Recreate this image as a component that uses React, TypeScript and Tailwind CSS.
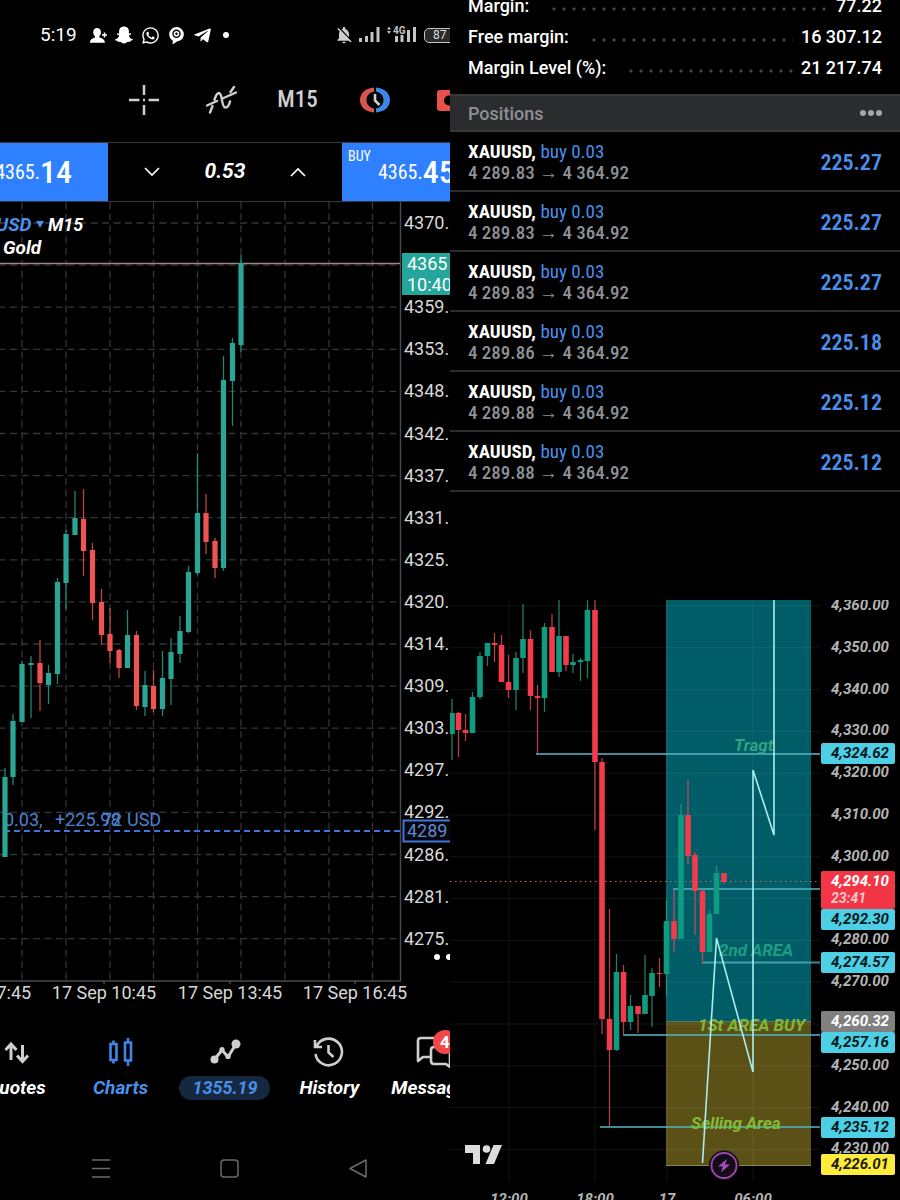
import type { ReactNode } from 'react';
import { FaSnapchatGhost, FaTelegramPlane, FaWhatsapp } from 'react-icons/fa';
import { MdNotificationsOff } from 'react-icons/md';

// [x, high, body top, body bottom, low, up?]
type Candle = [number, number, number, number, number, 0 | 1];

const goldCandles: Candle[] = [
  [5, 768, 777, 857, 857, 1],
  [13, 714, 721, 777, 785, 1],
  [22, 661, 664, 722, 722, 1],
  [31, 656, 663, 665, 718, 1],
  [40, 640, 663, 683, 711, 0],
  [48.5, 665, 673, 685, 704, 1],
  [57.5, 578, 582, 674, 684, 1],
  [66, 530, 534, 583, 609, 1],
  [75, 491, 518, 535, 535, 1],
  [83.5, 489, 519, 551, 576, 0],
  [92.5, 543, 550, 603, 620, 0],
  [101.5, 589, 602, 635, 645, 0],
  [110, 608, 634, 651, 663, 0],
  [119, 649, 650, 668, 678, 0],
  [127.5, 610, 635, 668, 668, 1],
  [136.5, 631, 635, 706, 710, 0],
  [145, 671, 685, 707, 716, 1],
  [153.5, 670, 686, 709, 712, 0],
  [162.5, 651, 678, 709, 716, 1],
  [171, 638, 652, 679, 705, 1],
  [180, 616, 631, 654, 663, 1],
  [188.5, 566, 572, 632, 633, 1],
  [197.5, 453, 513, 573, 575, 1],
  [206, 494, 513, 542, 554, 0],
  [215, 538, 541, 568, 578, 0],
  [223.5, 356, 380, 568, 571, 1],
  [232.5, 338, 343, 381, 426, 1],
  [241, 255, 263, 345, 352, 1],
];

const setupCandles: Candle[] = [
  [452, 699, 713, 734, 760, 1],
  [458.5, 712, 713, 730, 757, 0],
  [465.5, 714, 730, 733, 741, 0],
  [472.5, 692, 697, 733, 733, 1],
  [480, 652, 656, 697, 699, 1],
  [487.5, 643, 643, 656, 666, 1],
  [494.5, 633, 643, 645, 662, 0],
  [501.5, 635, 645, 682, 682, 0],
  [508.5, 655, 682, 690, 698, 0],
  [516, 652, 658, 690, 710, 1],
  [523, 604, 639, 658, 673, 1],
  [530.5, 630, 639, 696, 710, 0],
  [537.5, 685, 696, 698, 754, 0],
  [544.5, 623, 627, 698, 712, 1],
  [552, 614, 627, 672, 672, 0],
  [559, 600, 636, 672, 677, 1],
  [566, 636, 636, 665, 671, 0],
  [573, 654, 662, 665, 673, 1],
  [580.5, 658, 660, 662, 681, 1],
  [587.5, 600, 610, 661, 678, 1],
  [595, 600, 610, 762, 830, 0],
  [602, 758, 762, 1019, 1034, 0],
  [609.5, 909, 1019, 1050, 1126, 0],
  [616.5, 954, 972, 1050, 1051, 1],
  [623.5, 965, 972, 1022, 1034, 0],
  [630.5, 995, 1006, 1022, 1030, 1],
  [638, 1006, 1006, 1014, 1033, 0],
  [645, 955, 995, 1014, 1014, 1],
  [652, 968, 973, 996, 1027, 1],
  [659.5, 958, 973, 974, 987, 0],
  [666.5, 900, 921, 974, 997, 1],
  [674, 889, 921, 939, 952, 0],
  [681, 804, 815, 939, 939, 1],
  [688, 780, 815, 856, 864, 0],
  [695, 852, 855, 891, 935, 0],
  [702.5, 890, 891, 952, 964, 0],
  [709.5, 910, 914, 952, 952, 1],
  [716.5, 866, 873, 914, 914, 1],
  [724, 873, 873, 882, 884, 0],
];

const goldPrices = [
  '4370.', '', '4359.', '4353.', '4348.', '4342.', '4337.', '4331.', '4325.',
  '4320.', '4314.', '4309.', '4303.', '4297.', '4292.', '4286.', '4281.', '4275.',
];
const goldTimes = [
  { x: -21, label: '17 Sep 07:45' },
  { x: 104, label: '17 Sep 10:45' },
  { x: 230, label: '17 Sep 13:45' },
  { x: 355, label: '17 Sep 16:45' },
];
const goldColumns = [22, 66, 110, 153.5, 197.5, 241, 285, 329, 372.5];

const setupPrices = [
  '4,360.00', '4,350.00', '4,340.00', '4,330.00', '4,320.00', '4,310.00', '4,300.00',
  '', '4,280.00', '4,270.00', '', '4,250.00', '4,240.00', '4,230.00',
];
const setupTimes = [
  { x: 509, label: '12:00' },
  { x: 595, label: '18:00' },
  { x: 667, label: '17' },
  { x: 753, label: '06:00' },
];
const levels = [
  { x: 536, y: 754 },
  { x: 673, y: 889 },
  { x: 703, y: 962.5 },
  { x: 623, y: 1035 },
  { x: 600, y: 1127 },
];
const priceTags = [
  { y: 743, label: '4,324.62', box: 'fill-[#4dd0e5]', text: 'fill-[#06191c]' },
  { y: 909, label: '4,292.30', box: 'fill-[#4dd0e5]', text: 'fill-[#06191c]' },
  { y: 952, label: '4,274.57', box: 'fill-[#4dd0e5]', text: 'fill-[#06191c]' },
  { y: 1011, label: '4,260.32', box: 'fill-[#808080]', text: 'fill-white' },
  { y: 1032, label: '4,257.16', box: 'fill-[#4dd0e5]', text: 'fill-[#06191c]' },
  { y: 1117, label: '4,235.12', box: 'fill-[#4dd0e5]', text: 'fill-[#06191c]' },
  { y: 1154, label: '4,226.01', box: 'fill-[#ffeb3b]', text: 'fill-[#1c1a06]' },
];
const notes = [
  { x: 734, y: 751, label: 'Tragt', fill: 'fill-[#2fa384]' },
  { x: 719, y: 956, label: '2nd AREA', fill: 'fill-[#1f9c82]' },
  { x: 698, y: 1031, label: '1St AREA BUY', fill: 'fill-[#7fb73c]' },
  { x: 691, y: 1129, label: 'Selling Area', fill: 'fill-[#84bb35]' },
];

const margins = [
  { label: 'Margin:', value: '77.22' },
  { label: 'Free margin:', value: '16 307.12' },
  { label: 'Margin Level (%):', value: '21 217.74' },
];
const positions = [
  { open: '4 289.83', profit: '225.27' },
  { open: '4 289.83', profit: '225.27' },
  { open: '4 289.83', profit: '225.27' },
  { open: '4 289.86', profit: '225.18' },
  { open: '4 289.88', profit: '225.12' },
  { open: '4 289.88', profit: '225.12' },
];

function Candles({ data, width, up, down }: { data: Candle[]; width: number; up: string; down: string }) {
  return (
    <g>
      {data.map(([x, high, top, bottom, low, isUp], i) => (
        <g key={i} className={isUp ? up : down}>
          <line x1={x} x2={x} y1={high} y2={low} strokeWidth="1.3" opacity="0.8" />
          <rect x={x - width / 2} y={top} width={width} height={bottom - top} stroke="none" />
        </g>
      ))}
    </g>
  );
}

function StatusBar() {
  return (
    <div className="flex h-[66px] items-center pt-1 pr-[22px] pl-[76px] text-white">
      <span className="w-[50px] text-[19px]">5:19</span>
      <svg className="h-[17px] w-[17px]" viewBox="0 0 17 17" fill="currentColor">
        <path d="M7 1c2.500 0 4 1.800 4 4.200 0 1.600-.7 3-1.700 3.900v1.300c2.500.8 5.200 1.500 5.500 4.600v.7H0V15c.3-3 2.800-3.800 4.900-4.600V9.100C4 8.200 3.200 6.800 3.200 5.200 3.200 2.800 4.700 1 7 1Z" />
        <path d="M14.500 5.500v5M12 8h5" stroke="currentColor" strokeWidth="1.500" />
      </svg>
      <FaSnapchatGhost className="ml-2 h-[18px] w-[18px]" />
      <FaWhatsapp className="ml-2 h-[19px] w-[19px]" />
      <svg className="ml-2 h-[19px] w-[17px]" viewBox="0 0 17 19">
        <path d="M8.500 1a7.300 7.300 0 0 1 7.300 7.300c0 4-3.200 6.800-6.700 7.100L4.500 18.500l.4-3.800C2.600 13.400 1.200 11.200 1.200 8.300A7.300 7.300 0 0 1 8.500 1Z" fill="white" />
        <circle cx="8.500" cy="7.800" r="4.200" className="fill-black" />
        <circle cx="8.500" cy="7.800" r="2.800" fill="white" />
        <circle cx="8.500" cy="7.800" r="1.200" className="fill-black" />
      </svg>
      <FaTelegramPlane className="ml-2 h-[19px] w-[19px]" />
      <span className="ml-[11px] h-1.5 w-1.5 rounded-full bg-white" />
      <MdNotificationsOff className="ml-auto h-5 w-5 text-[#cfcfcf]" />
      <svg className="ml-1 h-[18px] w-6 fill-[#c4c4c4]" viewBox="0 0 24 18">
        <path d="M1 12h3v4H1zM7 10h3v6H7zM12.500 6h3v10h-3zM18.500 1h3v15h-3z" />
      </svg>
      <svg className="ml-1 h-[20px] w-8 fill-[#c4c4c4]" viewBox="0 0 32 20">
        <path d="m1 4.500 2-3 2 3zM1 6l2 3 2-3zM9 11h3v6H9zM14.500 10h3v7h-3zM21 5h3v12h-3zM27 2h3v15h-3z" />
        <text x="7" y="9" className="font-[Roboto] text-[10px] font-bold">4G</text>
      </svg>
      <span className="ml-1.5 w-[40px] rounded-[5px] border border-[#c4c4c4] bg-[#2a2a2a] pl-2 text-[12px] leading-[13px] text-[#dcdcdc]">87</span>
    </div>
  );
}

function Toolbar() {
  return (
    <div className="flex h-[76px] pt-2.5 pr-0 pl-[141px] text-[#cfcfcf]">
      <div className="-mr-1 grid flex-1 grid-cols-5 *:flex *:h-12 *:items-center *:justify-center">
        <button type="button" aria-label="Crosshair">
          <svg className="h-8 w-8" viewBox="0 0 32 32" stroke="currentColor" strokeWidth="2.500">
            <path d="M16 1v10M16 21v10M1 16h10.500M20.500 16H31M15 16h2" />
          </svg>
        </button>
        <button type="button" aria-label="Indicators">
          <svg className="h-8 w-8" viewBox="0 0 32 32" fill="none" stroke="currentColor" strokeWidth="2.400" strokeLinecap="round">
            <path d="M2 21.500 12 17M18.500 14 31 8.500M5 28.500 7.500 22M9.500 15.500C11 11 12.500 9 14 9c4 .5 2 14.500 6.500 14.500 2.800 0 3.800-3 4.500-6M25.500 8l3.500-5" />
          </svg>
        </button>
        <button type="button" className="font-['Roboto_Condensed','Roboto',sans-serif] text-[23px] font-medium">M15</button>
        <button type="button" aria-label="Trading sessions">
          <svg className="h-8 w-8" viewBox="0 0 32 32">
            <path d="M15 3.500C7 4 1 9 1 16s6 12 14 12.500v-4C10.500 23.500 7.500 20.500 7.500 16S10.500 8.500 15 7.500Z" className="fill-[#d9574a]" />
            <path d="M17 3.500C25 4 31 9 31 16s-6 12-14 12.500v-4c4.500-1 7.500-4 7.500-8.500S21.500 8.500 17 7.500Z" className="fill-[#3f86e8]" />
            <path d="M16 10v6.500l4.500 4.500" fill="none" stroke="currentColor" strokeWidth="2.600" />
          </svg>
        </button>
        <button type="button" aria-label="One click trading">
          <svg className="h-8 w-8" viewBox="0 0 32 32">
            <rect x="1" y="6" width="30" height="21" rx="3" className="fill-[#e8514a]" />
            <circle cx="13" cy="16.500" r="5" className="fill-black" />
          </svg>
        </button>
      </div>
    </div>
  );
}

function TradeBar() {
  return (
    <div className="flex h-[60px] border-y border-[#3a3a3a] text-white">
      <button type="button" className="flex w-36 items-center justify-end bg-[#2f80ff] pr-9 font-['Roboto_Condensed','Roboto',sans-serif]">
        <span className="text-[20px] leading-9">4365.</span>
        <span className="text-[32px] leading-9 font-medium">14</span>
      </button>
      <div className="flex flex-1 items-center justify-between px-9">
        <button type="button" aria-label="Decrease volume">
          <svg className="h-4 w-4" viewBox="0 0 16 16" fill="none" stroke="white" strokeWidth="1.700"><path d="m1 4 7 7 7-7" /></svg>
        </button>
        <span className="text-[21px] font-bold italic">0.53</span>
        <button type="button" aria-label="Increase volume">
          <svg className="h-4 w-4" viewBox="0 0 16 16" fill="none" stroke="white" strokeWidth="1.700"><path d="m1 12 7-7 7 7" /></svg>
        </button>
      </div>
      <button type="button" className="relative flex w-36 items-center bg-[#2f80ff] pl-9 font-['Roboto_Condensed','Roboto',sans-serif]">
        <span className="absolute top-1 left-1.5 text-[14px] leading-[18px]">BUY</span>
        <span className="text-[20px] leading-9">4365.</span>
        <span className="text-[32px] leading-9 font-medium">45</span>
      </button>
    </div>
  );
}

function GoldChart() {
  return (
    <svg className="block w-full font-[Roboto]" viewBox="-36 202 522 810">
      <g className="stroke-[#353538]" strokeWidth="1.300" strokeDasharray="7 4.500">
        {goldColumns.map((x) => <line key={x} x1={x} x2={x} y1="202" y2="980" />)}
        {goldPrices.map((_, i) => <line key={i} x1="-36" x2="400" y1={223 + i * 42.1} y2={223 + i * 42.1} />)}
      </g>
      <path d="M400.500 202V981H-36M104 981v3M230 981v3M355 981v3" fill="none" className="stroke-[#4a4a4e]" strokeWidth="1.400" />
      <line x1="-36" x2="400" y1="263.500" y2="263.500" className="stroke-[#9c8782]" strokeWidth="1.600" />

      <g className="fill-[#4a80d0] text-[18px]">
        <text x="4" y="826">0.03,</text>
        <text x="55" y="826">+225.98</text>
        <text x="102" y="826">72</text>
        <text x="127" y="826">USD</text>
      </g>
      <line x1="-36" x2="400" y1="831" y2="831" className="stroke-[#3f74dc]" strokeWidth="1.800" strokeDasharray="6 4" />
      <Candles data={goldCandles} width={5.2} up="fill-[#2aa596] stroke-[#2aa596]" down="fill-[#ee5552] stroke-[#ee5552]" />

      <g className="text-[19px] font-bold italic" fill="white">
        <text x="-40" y="231" className="fill-[#4a8fea]">XAUUSD</text>
        <path d="M36 221h8l-4 7z" className="fill-[#4a8fea]" />
        <text x="48" y="231" className="text-[18px]">M15</text>
        <text x="3" y="254">Gold</text>
      </g>

      <g className="fill-[#d8d8d8] text-[18px]">
        {goldPrices.map((price, i) => <text key={i} x="404" y={229 + i * 42.1}>{price}</text>)}
        {goldTimes.map((t) => <text key={t.x} x={t.x} y="999" textAnchor="middle">{t.label}</text>)}
      </g>
      <rect x="402" y="253" width="90" height="42" className="fill-[#26a69a]" />
      <g fill="white" className="text-[18px]">
        <text x="407" y="270">4365</text>
        <text x="407" y="291">10:40</text>
      </g>
      <rect x="403.500" y="820.500" width="90" height="21" className="fill-[#05070d] stroke-[#3f74dc]" strokeWidth="2" />
      <text x="407" y="837" className="fill-[#6488cf] text-[18px]">4289</text>
      <g fill="white">
        <circle cx="437" cy="957" r="3" />
        <circle cx="449" cy="957" r="3" />
      </g>
    </svg>
  );
}

function Tab({ label, active, children }: { label: string; active?: boolean; children: ReactNode }) {
  return (
    <a href="#" className={`flex flex-col items-center gap-2 ${active ? 'text-[#3f86ea]' : 'text-[#cfcfcf]'}`}>
      {children}
      <span className={`text-[19px] leading-6 font-bold italic ${active ? 'text-[#4a8fea]' : 'text-white'}`}>{label}</span>
    </a>
  );
}

function TabBar() {
  return (
    <nav className="grid h-[112px] grid-cols-5 pt-6">
      <Tab label="Quotes">
        <svg className="h-8 w-8" viewBox="0 0 32 32" fill="none" stroke="currentColor" strokeWidth="3">
          <path d="M11 24V9M5.500 14 11 8l5.500 6M22.500 9v15M17 19.500l5.500 6 5.500-6" />
        </svg>
      </Tab>
      <Tab label="Charts" active>
        <svg className="h-8 w-8" viewBox="0 0 32 32" fill="none" stroke="currentColor" strokeWidth="2.600">
          <path d="M5.500 8h6v16h-6zM8.500 4.500V8M8.500 24v3.500M20 6.500h6v18h-6zM23 2v4.500M23 24.500V30" />
        </svg>
      </Tab>
      <a href="#" className="flex flex-col items-center gap-2 text-[#cfcfcf]">
        <svg className="h-8 w-8" viewBox="0 0 32 32" fill="none" stroke="currentColor" strokeWidth="3">
          <path d="m5 24 8-10 6 7L27 8" strokeLinejoin="round" />
          <circle cx="5.500" cy="23.500" r="4" fill="currentColor" stroke="none" />
          <circle cx="27" cy="8" r="4.500" fill="currentColor" stroke="none" />
          <circle cx="13" cy="13.500" r="2.600" fill="currentColor" stroke="none" />
          <circle cx="19" cy="20.500" r="2.600" fill="currentColor" stroke="none" />
        </svg>
        <span className="w-[91px] rounded-full bg-[#15283f] text-center text-[18px] leading-6 font-bold italic text-[#4a8fea]">1355.19</span>
      </a>
      <Tab label="History">
        <svg className="h-8 w-8" viewBox="0 0 32 32" fill="none" stroke="currentColor" strokeWidth="2.600">
          <path d="M3.500 10.500A13.300 13.300 0 1 1 2.500 18M2 4v7h7M15.500 9v7.500l5 4.500" />
        </svg>
      </Tab>
      <Tab label="Messages">
        <span className="relative">
          <svg className="h-8 w-9" viewBox="0 0 36 32" fill="none" stroke="currentColor" strokeWidth="2.600" strokeLinejoin="round">
            <path d="M14 21H7l-5 4V5c0-2 1-3 3-3h21c2 0 3 1 3 3v5" />
            <path d="M18 11h13c2 0 3 1 3 3v17l-4-3H18c-2 0-3-1-3-3V14c0-2 1-3 3-3Z" />
          </svg>
          <span className="absolute -top-1.5 left-[17px] h-6 w-6 rounded-full bg-[#f0484a] text-center text-[17px] leading-6 font-bold text-white">4</span>
        </span>
      </Tab>
    </nav>
  );
}

function SystemNav() {
  return (
    <div className="flex justify-center gap-[104px] pt-8 pr-0 pl-2">
      <button type="button" aria-label="Recents">
        <svg className="h-6 w-6" viewBox="0 0 24 24" fill="none" stroke="#6b6b6b" strokeWidth="1.500"><path d="M3 4h18M3 12.500h18M3 21h18" /></svg>
      </button>
      <button type="button" aria-label="Home">
        <svg className="h-6 w-6" viewBox="0 0 24 24" fill="none" stroke="#6b6b6b" strokeWidth="1.500"><rect x="4" y="4" width="17" height="17" rx="3" /></svg>
      </button>
      <button type="button" aria-label="Back">
        <svg className="h-6 w-6" viewBox="0 0 24 24" fill="none" stroke="#6b6b6b" strokeWidth="1.500" strokeLinejoin="round"><path d="M21 4v17L5 12.500z" /></svg>
      </button>
    </div>
  );
}

function Account() {
  return (
    <section className="pb-[108px]">
      <dl className="-mt-2.5 px-[18px] pb-[11px] text-[18px] leading-[31px] font-medium text-white">
        {margins.map((m) => (
          <div key={m.label} className="flex items-center">
            <dt>{m.label}</dt>
            <dd className="flex flex-1 items-center">
              <span className="mt-1.5 mr-2 ml-5 h-2.5 flex-1 bg-[radial-gradient(circle,#4a4a4a_1px,transparent_2px)] bg-size-[10px_10px] bg-repeat-x" />
              {m.value}
            </dd>
          </div>
        ))}
      </dl>
      <header className="flex h-[38px] items-center justify-between border-y-2 border-[#38393b] bg-[#2b2c2e] px-[18px]">
        <h2 className="text-[18px] font-medium text-[#8e9196]">Positions</h2>
        <button type="button" aria-label="More" className="flex gap-[2px]">
          <span className="h-[6px] w-[6px] rounded-full bg-[#a5a7ab]" />
          <span className="h-[6px] w-[6px] rounded-full bg-[#a5a7ab]" />
          <span className="h-[6px] w-[6px] rounded-full bg-[#a5a7ab]" />
        </button>
      </header>
      <ul className="font-['Roboto_Condensed','Roboto',sans-serif]">
        {positions.map((p, i) => (
          <li key={i} className="flex h-[60px] items-center justify-between border-b-2 border-[#2b2c2e] px-[18px] pt-0.5">
            <div className="text-[19px] leading-[21px]">
              <p className="text-[#4a8fea]"><b className="font-bold text-white">XAUUSD,</b> buy 0.03</p>
              <p className="font-medium text-[#8e9196]">{p.open} → 4 364.92</p>
            </div>
            <span className="text-[22px] font-semibold text-[#4a8fea]">{p.profit}</span>
          </li>
        ))}
      </ul>
    </section>
  );
}

function SetupChart() {
  return (
    <svg className="block w-full font-[Roboto]" viewBox="450 600 450 600">
      <rect x="666" y="600" width="145" height="421" className="fill-[#005c66]" />
      <rect x="666" y="1021" width="145" height="144" className="fill-[#5b5117]" />
      <path d="M666 1021.500h145" className="stroke-[#5f7a62]" />
      <path d="M666 1165.500h145" className="stroke-[#8b8350]" />
      <g className="stroke-white" opacity="0.07">
        {setupPrices.map((_, i) => <line key={i} x1="450" x2="820" y1={606 + i * 41.8} y2={606 + i * 41.8} />)}
        {setupTimes.map((t) => <line key={t.x} x1={t.x} x2={t.x} y1="600" y2="1181" />)}
      </g>
      <line x1="450" x2="820" y1="881.500" y2="881.500" className="stroke-[#d0705f]" strokeDasharray="1.500 3.500" />
      <g className="stroke-[#4fb0bc]" strokeWidth="2" opacity="0.8">
        {levels.map((l) => <line key={l.y} x1={l.x} x2="820" y1={l.y} y2={l.y} />)}
      </g>
      <Candles data={setupCandles} width={5.6} up="fill-[#0f9b80] stroke-[#2b9a80]" down="fill-[#f23b4b] stroke-[#e0505a]" />
      <g className="text-[17px] font-bold italic">
        {notes.map((n) => <text key={n.label} x={n.x} y={n.y} className={n.fill}>{n.label}</text>)}
      </g>
      <path d="M702.500 1163 716.500 938 753 1072V770L774 835V600" fill="none" className="stroke-[#a9eeee]" strokeWidth="1.600" />

      <path d="M465 1145h15v19h-7v-11h-8zM493.500 1145H502l-8 19h-8.500z" className="fill-[#dcdcdc]" />
      <circle cx="486.500" cy="1149" r="3.800" className="fill-[#dcdcdc]" />
      <circle cx="724" cy="1165.500" r="15" className="fill-[#150c18]" />
      <circle cx="724" cy="1165.500" r="12.500" className="fill-[#150c18] stroke-[#9a4bb0]" strokeWidth="1.800" />
      <path d="m727 1159-9 7.500h5l-2 6 9-8h-5z" className="fill-[#a24fbb]" />

      <g className="fill-[#b4b4b4] text-[15px] font-bold italic">
        {setupPrices.map((price, i) => <text key={i} x="831" y={610 + i * 41.8}>{price}</text>)}
        {setupTimes.map((t) => <text key={t.x} x={t.x} y="1204" textAnchor="middle">{t.label}</text>)}
      </g>
      <rect x="821" y="871" width="74" height="38" rx="2" className="fill-[#f23645]" />
      <g className="text-[15px] font-bold italic">
        <text x="831" y="886" fill="white">4,294.10</text>
        <text x="831" y="903" className="fill-[#fbc5c9] text-[14px]">23:41</text>
        {priceTags.map((t) => (
          <g key={t.y}>
            <rect x="821" y={t.y} width="74" height="21" rx="2" className={t.box} />
            <text x="831" y={t.y + 15} className={t.text}>{t.label}</text>
          </g>
        ))}
      </g>
    </svg>
  );
}

export default function App() {
  return (
    <main className="grid min-h-screen grid-cols-2 overflow-hidden bg-black font-['Roboto',sans-serif]">
      <section className="overflow-hidden">
        <div className="-mx-9">
          <StatusBar />
          <Toolbar />
          <TradeBar />
          <GoldChart />
          <TabBar />
          <SystemNav />
        </div>
      </section>
      <section className="overflow-hidden">
        <Account />
        <SetupChart />
      </section>
    </main>
  );
}
